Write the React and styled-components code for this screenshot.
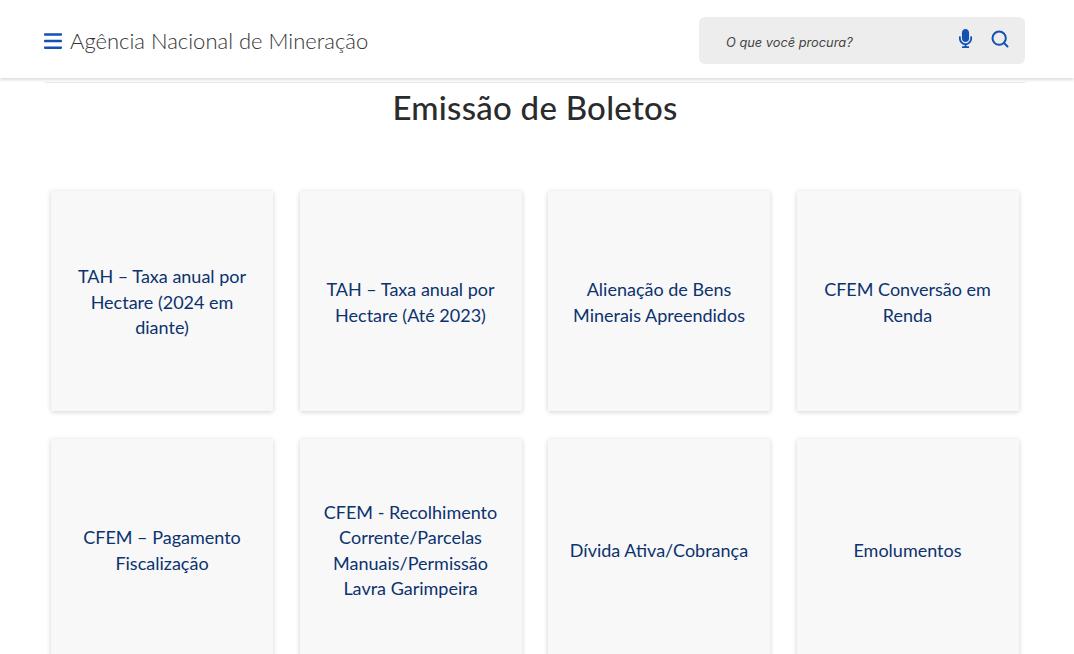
import React from 'react';
import styled, { createGlobalStyle } from 'styled-components';
import { FaMicrophone } from 'react-icons/fa';
import { Search } from 'lucide-react';

const GlobalStyle = createGlobalStyle`
  html, body {
    margin: 0;
    height: 100%;
    overflow: hidden;
    background: #fff;
    font-family: "Lato", "Open Sans", sans-serif;
  }
`;

const Header = styled.header`
  height: 78px;
  padding: 0 49px 0 44px;
  display: flex;
  align-items: center;
  justify-content: space-between;
  background: #fff;
  box-shadow: 0 2px 3px rgba(0, 0, 0, 0.14);
  position: relative;
`;

const Brand = styled.div`
  display: flex;
  align-items: center;
  gap: 8px;
  color: #333;
  font-size: 22px;
  font-weight: 300;
  padding-top: 3px;
`;

const MenuIcon = styled.svg`
  width: 18px;
  height: 16px;
  flex-shrink: 0;
  fill: #1351b4;
`;

const SearchBox = styled.div`
  width: 326px;
  height: 47px;
  margin-top: 3px;
  padding: 0 15px 0 27px;
  box-sizing: border-box;
  display: flex;
  align-items: center;
  background: #ededed;
  border-radius: 6px;
`;

const Placeholder = styled.span`
  flex: 1;
  font-family: "Inter", sans-serif;
  font-style: italic;
  font-size: 12.8px;
  color: #444;
  padding-top: 3px;
`;

const IconRow = styled.div`
  display: flex;
  align-items: center;
  gap: 15px;
  color: #1351b4;
  margin-bottom: 5px;
`;

const SearchIcon = styled(Search)`
  margin-top: 2px;
`;

const Main = styled.main`
  width: 980px;
  margin: 4px 0 0 45px;
  border-top: 1px solid #e8e8e8;
`;

const Title = styled.h1`
  margin: 4px 0 0;
  text-align: center;
  font-size: 33px;
  letter-spacing: 0.25px;
  line-height: 40px;
  font-weight: 500;
  color: #2b2b2b;
`;

const CardGrid = styled.div`
  display: grid;
  grid-template-columns: repeat(4, 1fr);
  gap: 28px 26.5px;
  margin-top: 64px;
  padding: 0 6.5px 0 6px;
`;

const Card = styled.a`
  height: 220px;
  padding: 3px 16px 0;
  box-sizing: border-box;
  display: flex;
  align-items: center;
  justify-content: center;
  text-align: center;
  background: #f8f8f8;
  box-shadow: 0 1px 5px rgba(0, 0, 0, 0.18);
  color: #0c326f;
  font-size: 18px;
  line-height: 25.5px;
`;

const cards = [
  'TAH – Taxa anual por Hectare (2024 em diante)',
  'TAH – Taxa anual por Hectare (Até 2023)',
  'Alienação de Bens Minerais Apreendidos',
  'CFEM Conversão em Renda',
  'CFEM – Pagamento Fiscalização',
  'CFEM - Recolhimento Corrente/Parcelas Manuais/Permissão Lavra Garimpeira',
  'Dívida Ativa/Cobrança',
  'Emolumentos',
];

const App = () => {
  return (
    <>
      <GlobalStyle />
      <Header>
        <Brand>
          <MenuIcon viewBox="0 0 18 16">
            <rect x="0" y="0.2" width="18" height="2.5" rx="0.8" />
            <rect x="0" y="6.8" width="18" height="2.5" rx="0.8" />
            <rect x="0" y="13.4" width="18" height="2.5" rx="0.8" />
          </MenuIcon>
          <span>Agência Nacional de Mineração</span>
        </Brand>
        <SearchBox>
          <Placeholder>O que você procura?</Placeholder>
          <IconRow>
            <FaMicrophone size={19} />
            <SearchIcon size={20} strokeWidth={2.4} />
          </IconRow>
        </SearchBox>
      </Header>
      <Main>
        <Title>Emissão de Boletos</Title>
        <CardGrid>
          {cards.map((label) => (
            <Card key={label}>{label}</Card>
          ))}
        </CardGrid>
      </Main>
    </>
  );
};

export default App;
